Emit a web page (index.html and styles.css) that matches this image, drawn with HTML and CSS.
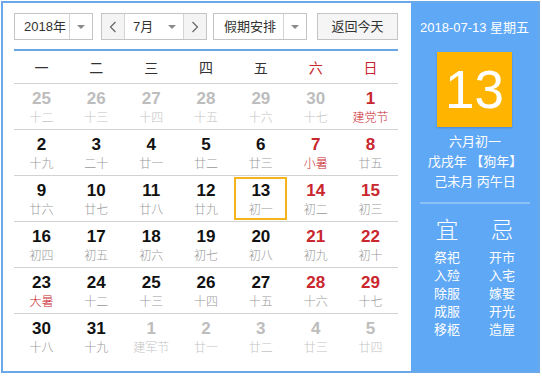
FILE: index.html
```html
<!DOCTYPE html>
<html lang="zh-CN">
<head>
	<meta charset="UTF-8">
	<title>万年历</title>
	<link rel="stylesheet" href="styles.css">
</head>
<body>
	<div class="cal">
		<div class="main">
			<div class="toolbar">
				<div class="sel year"><span class="val">2018年</span><span class="drop"><i class="tri"></i></span></div>
				<div class="sel month">
					<span class="btn"><svg width="8" height="12" viewBox="0 0 8 12"><polyline points="6.5,1 1.5,6 6.5,11" fill="none" stroke="#666" stroke-width="1.2"/></svg></span>
					<span class="val">7月</span><span class="drop nosep"><i class="tri"></i></span>
					<span class="btn"><svg width="8" height="12" viewBox="0 0 8 12"><polyline points="1.5,1 6.5,6 1.5,11" fill="none" stroke="#666" stroke-width="1.2"/></svg></span>
				</div>
				<div class="sel holiday"><span class="val">假期安排</span><span class="drop"><i class="tri"></i></span></div>
				<div class="back">返回今天</div>
			</div>
			<div class="grid">
				<div class="week head">
					<span>一</span><span>二</span><span>三</span><span>四</span><span>五</span><span class="red">六</span><span class="red">日</span>
				</div>
				<div class="week">
					<div class="day other"><b>25</b><small>十二</small></div>
					<div class="day other"><b>26</b><small>十三</small></div>
					<div class="day other"><b>27</b><small>十四</small></div>
					<div class="day other"><b>28</b><small>十五</small></div>
					<div class="day other"><b>29</b><small>十六</small></div>
					<div class="day other"><b>30</b><small>十七</small></div>
					<div class="day red fest"><b>1</b><small>建党节</small></div>
				</div>
				<div class="week">
					<div class="day"><b>2</b><small>十九</small></div>
					<div class="day"><b>3</b><small>二十</small></div>
					<div class="day"><b>4</b><small>廿一</small></div>
					<div class="day"><b>5</b><small>廿二</small></div>
					<div class="day"><b>6</b><small>廿三</small></div>
					<div class="day red fest"><b>7</b><small>小暑</small></div>
					<div class="day red"><b>8</b><small>廿五</small></div>
				</div>
				<div class="week">
					<div class="day"><b>9</b><small>廿六</small></div>
					<div class="day"><b>10</b><small>廿七</small></div>
					<div class="day"><b>11</b><small>廿八</small></div>
					<div class="day"><b>12</b><small>廿九</small></div>
					<div class="day today"><b>13</b><small>初一</small></div>
					<div class="day red"><b>14</b><small>初二</small></div>
					<div class="day red"><b>15</b><small>初三</small></div>
				</div>
				<div class="week">
					<div class="day"><b>16</b><small>初四</small></div>
					<div class="day"><b>17</b><small>初五</small></div>
					<div class="day"><b>18</b><small>初六</small></div>
					<div class="day"><b>19</b><small>初七</small></div>
					<div class="day"><b>20</b><small>初八</small></div>
					<div class="day red"><b>21</b><small>初九</small></div>
					<div class="day red"><b>22</b><small>初十</small></div>
				</div>
				<div class="week">
					<div class="day fest"><b>23</b><small>大暑</small></div>
					<div class="day"><b>24</b><small>十二</small></div>
					<div class="day"><b>25</b><small>十三</small></div>
					<div class="day"><b>26</b><small>十四</small></div>
					<div class="day"><b>27</b><small>十五</small></div>
					<div class="day red"><b>28</b><small>十六</small></div>
					<div class="day red"><b>29</b><small>十七</small></div>
				</div>
				<div class="week last">
					<div class="day"><b>30</b><small>十八</small></div>
					<div class="day"><b>31</b><small>十九</small></div>
					<div class="day other"><b>1</b><small>建军节</small></div>
					<div class="day other"><b>2</b><small>廿一</small></div>
					<div class="day other"><b>3</b><small>廿二</small></div>
					<div class="day other"><b>4</b><small>廿三</small></div>
					<div class="day other"><b>5</b><small>廿四</small></div>
				</div>
			</div>
		</div>
		<div class="side">
			<div class="date">2018-07-13 星期五</div>
			<div class="big">13</div>
			<div class="lunar">
				<p>六月初一</p>
				<p>戊戌年 【狗年】</p>
				<p>己未月 丙午日</p>
			</div>
			<div class="yiji">
				<div class="col">
					<h3>宜</h3>
					<p>祭祀</p><p>入殓</p><p>除服</p><p>成服</p><p>移柩</p>
				</div>
				<div class="col">
					<h3>忌</h3>
					<p>开市</p><p>入宅</p><p>嫁娶</p><p>开光</p><p>造屋</p>
				</div>
			</div>
		</div>
	</div>
</body>
</html>
```

FILE: styles.css
```css
body {
	margin: 0;
	background: #fff;
	font-family: "Liberation Sans", "Noto Sans CJK SC", sans-serif;
	color: #333;
}
.cal {
	display: flex;
	width: 539px;
	height: 372px;
	margin: 1px;
	box-sizing: border-box;
	border: 2px solid #6aa8ea;
}
.main {
	width: 384px;
	padding: 10px 13px 0 11px;
}
.toolbar {
	display: flex;
	height: 27px;
}
.sel, .back {
	display: flex;
	box-sizing: border-box;
	height: 27px;
	border: 1px solid #c4c4c4;
	font-size: 13px;
	line-height: 25px;
	color: #333;
	background: #fff;
}
.sel .val {flex: 1; padding-left: 9px;}
.drop {
	display: flex;
	align-items: center;
	justify-content: center;
	width: 22px;
	border-left: 1px solid #d4d4d4;
}
.drop.nosep {border-left: none;}
.tri {
	width: 0;
	height: 0;
	border-left: 4px solid transparent;
	border-right: 4px solid transparent;
	border-top: 4px solid #8a8a8a;
}
.year {width: 79px;}
.month {width: 106px; margin-left: 8px;}
.month .val {padding-left: 8px;}
.holiday {width: 94px; margin-left: 6px;}
.holiday .val {padding-left: 10px;}
.btn {
	display: flex;
	align-items: center;
	justify-content: center;
	width: 22px;
	background: #f4f4f4;
}
.btn:first-child {border-right: 1px solid #d4d4d4;}
.btn:last-child {border-left: 1px solid #d4d4d4;}
.back {
	width: 81px;
	margin-left: 10px;
	justify-content: center;
	background: #f5f5f5;
}
.grid {
	margin-top: 9px;
	border-top: 2px solid #6aa5e4;
}
.week {
	display: grid;
	grid-template-columns: repeat(7, 1fr);
	height: 45px;
	border-bottom: 1px solid #d2d2d2;
}
.week.last {border-bottom: none;}
.week.head {
	height: 32px;
	align-items: center;
	text-align: center;
	font-size: 14px;
	color: #333;
}
.week.head .red {color: #c9262e;}
.day {
	box-sizing: border-box;
	padding-top: 5px;
	text-align: center;
}
.day b {
	display: block;
	font-size: 17px;
	line-height: 20px;
	color: #111;
}
.day small {
	display: block;
	margin-top: 1px;
	font-size: 12px;
	line-height: 16px;
	font-weight: 300;
	color: #999;
}
.day.red b {color: #c9262e;}
.day.fest small {color: #c9262e;}
.day.other b {color: #bdbdbd;}
.day.other small {color: #c4c4c4;}
.day.today {
	margin: 1px;
	padding-top: 2px;
	border: 2px solid #f5b41c;
}
.side {
	flex: 1;
	padding-top: 15px;
	background: #5fa8f6;
	color: #fff;
	text-align: center;
}
.date {
	font-size: 13px;
	line-height: 20px;
}
.big {
	width: 75px;
	height: 75px;
	margin: 14px auto 0;
	background: #ffb400;
	box-shadow: 0 1px 2px rgba(0, 0, 0, 0.2);
	font-size: 53px;
	line-height: 75px;
}
.lunar {
	margin-top: 5px;
	padding-bottom: 10px;
	border-bottom: 2px solid #8dc1f6;
	margin-left: 9px;
	margin-right: 8px;
}
.lunar p {
	margin: 0;
	font-size: 13px;
	line-height: 20px;
}
.yiji {
	display: flex;
	justify-content: center;
	padding-top: 12px;
}
.col {width: 55px;}
.col h3 {
	margin: 0 0 4px;
	font-size: 23px;
	font-weight: 300;
	line-height: 29px;
}
.col p {
	margin: 0;
	font-size: 13px;
	line-height: 18px;
}
```
